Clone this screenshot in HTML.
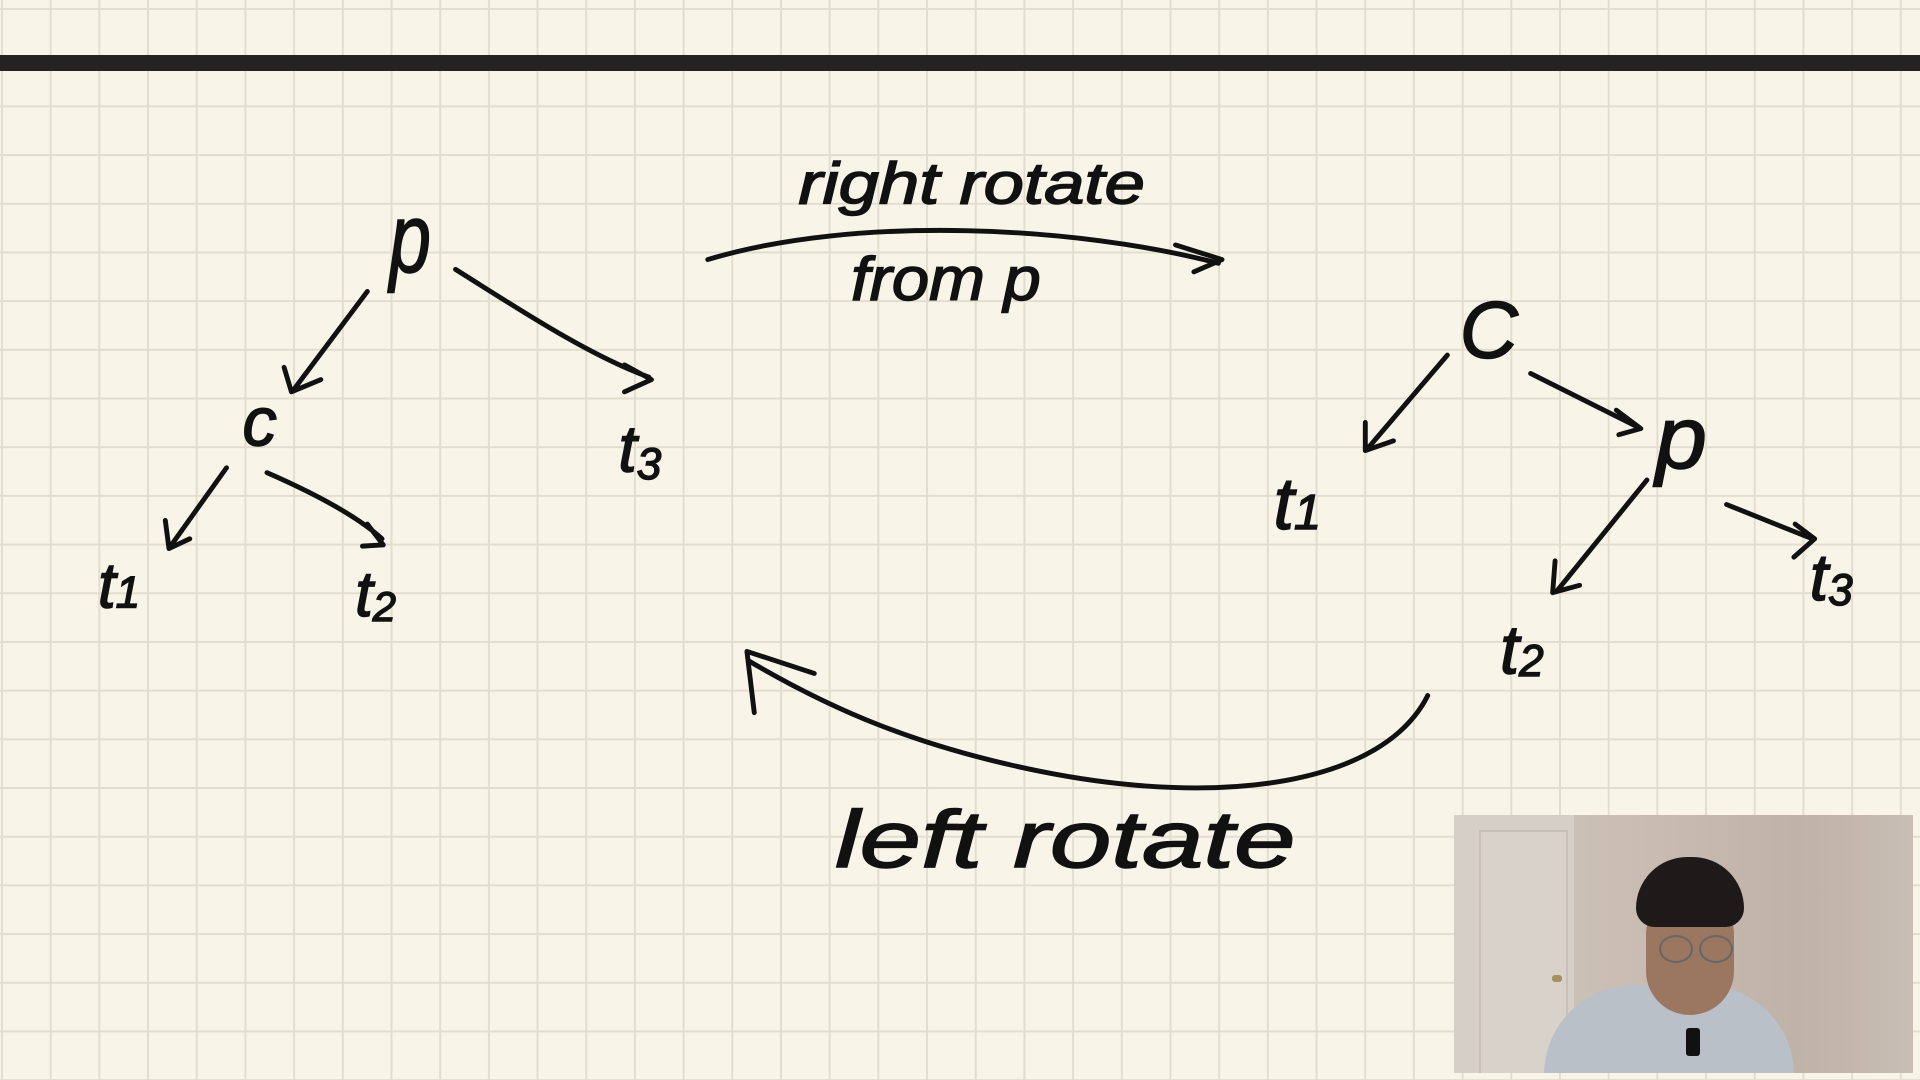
<!DOCTYPE html>
<html><head><style>
html,body{margin:0;padding:0;width:1920px;height:1080px;overflow:hidden}
body{background-color:#f8f5e8;
background-image:linear-gradient(90deg,#e2ddcf 2px,transparent 2px),linear-gradient(0deg,#e2ddcf 2px,transparent 2px);
background-size:48.7px 48.7px;background-position:1px 10px;position:relative;font-family:"Liberation Sans",sans-serif}
.bar{position:absolute;left:0;top:55px;width:1920px;height:16px;background:#252223}
svg{position:absolute;left:0;top:0}
.cam{position:absolute;left:1454px;top:815px;width:459px;height:258px;overflow:hidden;
background:linear-gradient(90deg,#cfc6bd 0%,#c9bdb3 40%,#bfb2a7 75%,#c8beb5 100%)}
</style></head><body>
<div class="bar"></div>
<svg width="1920" height="1080" viewBox="0 0 1568 882" preserveAspectRatio="none">
<g fill="none" stroke="#111" stroke-width="4" stroke-linecap="round" stroke-linejoin="round">
<path d="M300,238 L240,318 M232,300 L238,320 L262,310"/>
<path d="M372,220 C420,250 480,290 530,308 M510,298 L532,310 L510,320"/>
<path d="M185,382 L140,445 M135,425 L138,448 L155,440"/>
<path d="M218,386 C250,400 290,420 312,440 M300,428 L313,445 L296,446"/>
<path d="M578,212 C700,175 880,185 995,215 M960,200 L998,212 L975,222"/>
<path d="M1182,290 L1118,365 M1115,345 L1115,368 L1138,360"/>
<path d="M1250,305 L1340,350 M1320,335 L1340,350 L1322,355"/>
<path d="M1345,392 L1272,482 M1270,458 L1268,484 L1290,478"/>
<path d="M1410,412 L1480,440 M1466,428 L1482,440 L1465,455"/>
<path d="M1166,568 C1130,640 1000,660 850,630 C750,610 680,580 612,540 M616,582 L610,532 L665,550"/>
</g>
<g fill="#111" stroke="#111" stroke-width="1.2" font-family="Liberation Sans, sans-serif" font-style="italic">
<text x="318" y="222" font-size="80" textLength="34" lengthAdjust="spacingAndGlyphs">p</text>
<text x="198" y="364" font-size="56">c</text>
<text x="80" y="496" font-size="52">t<tspan font-size="36">1</tspan></text>
<text x="290" y="503" font-size="52">t<tspan font-size="34" dy="4">2</tspan></text>
<text x="505" y="385" font-size="54">t<tspan font-size="36" dy="6">3</tspan></text>
<text x="652" y="166" font-size="48" textLength="283" lengthAdjust="spacingAndGlyphs">right  rotate</text>
<text x="695" y="245" font-size="50" textLength="155" lengthAdjust="spacingAndGlyphs">from p</text>
<text x="1192" y="292" font-size="66">C</text>
<text x="1040" y="432" font-size="60">t<tspan font-size="40">1</tspan></text>
<text x="1352" y="382" font-size="72" textLength="42" lengthAdjust="spacingAndGlyphs">p</text>
<text x="1225" y="550" font-size="56">t<tspan font-size="36" dy="2">2</tspan></text>
<text x="1478" y="490" font-size="54">t<tspan font-size="36" dy="4">3</tspan></text>
<text x="682" y="708" font-size="66" textLength="376" lengthAdjust="spacingAndGlyphs">left   rotate</text>
</g>
</svg>
<div class="cam">
<div style="position:absolute;left:0;top:0;width:120px;height:258px;background:#d6cfc8"></div>
<div style="position:absolute;left:25px;top:15px;width:85px;height:243px;border:2px solid #c8c0b8;background:#d9d2cb"></div>
<div style="position:absolute;left:98px;top:160px;width:10px;height:7px;background:#a89060;border-radius:3px"></div>
<div style="position:absolute;left:90px;top:170px;width:250px;height:120px;background:#b9c0c8;border-radius:90px 90px 0 0"></div>
<div style="position:absolute;left:192px;top:80px;width:88px;height:120px;background:#9b7660;border-radius:40px 40px 45px 45px"></div>
<div style="position:absolute;left:182px;top:42px;width:108px;height:70px;background:#1d1a19;border-radius:55px 55px 20px 20px"></div>
<div style="position:absolute;left:205px;top:120px;width:30px;height:24px;border:2px solid #666;border-radius:50%"></div>
<div style="position:absolute;left:245px;top:120px;width:30px;height:24px;border:2px solid #666;border-radius:50%"></div>
<div style="position:absolute;left:232px;top:213px;width:14px;height:28px;background:#111;border-radius:3px"></div>
</div>
</body></html>
